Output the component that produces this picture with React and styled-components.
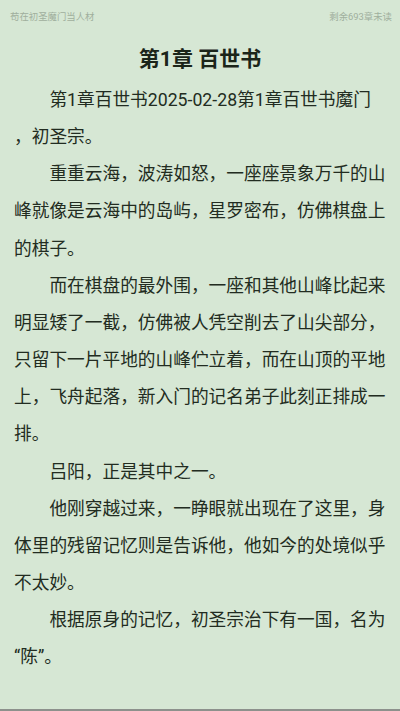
import React from "react";
import styled, { createGlobalStyle } from "styled-components";

const GlobalStyle = createGlobalStyle`
  html, body {
    margin: 0;
    padding: 0;
    background: #d6e7d4;
  }
  body {
    font-family: Roboto, "Noto Sans CJK SC", sans-serif;
  }
`;

const Page = styled.div`
  display: flex;
  flex-direction: column;
  height: 711px;
  box-sizing: border-box;
  background: #d6e7d4;
  border-bottom: 2px solid #8d918c;
  overflow: hidden;
`;

const Header = styled.div`
  display: flex;
  justify-content: space-between;
  align-items: center;
  height: 31px;
  padding: 0 8px 0 10px;
  font-size: 9.4px;
  color: #a0af9d;
`;

const Title = styled.h1`
  margin: 13px 0 0;
  line-height: 30px;
  font-size: 21px;
  font-weight: 700;
  text-align: center;
  color: #1b2519;
`;

const Body = styled.div`
  display: flex;
  flex-direction: column;
  padding: 8px 14px 0;
  font-size: 17.7px;
  line-height: 37.15px;
  color: #222c21;
`;

const Para = styled.p`
  margin: 0;
  white-space: nowrap;
  text-indent: 2em;
`;

const PARAGRAPHS = [
  ["第1章百世书2025-02-28第1章百世书魔门", "，初圣宗。"],
  [
    "重重云海，波涛如怒，一座座景象万千的山",
    "峰就像是云海中的岛屿，星罗密布，仿佛棋盘上",
    "的棋子。",
  ],
  [
    "而在棋盘的最外围，一座和其他山峰比起来",
    "明显矮了一截，仿佛被人凭空削去了山尖部分，",
    "只留下一片平地的山峰伫立着，而在山顶的平地",
    "上，飞舟起落，新入门的记名弟子此刻正排成一",
    "排。",
  ],
  ["吕阳，正是其中之一。"],
  [
    "他刚穿越过来，一睁眼就出现在了这里，身",
    "体里的残留记忆则是告诉他，他如今的处境似乎",
    "不太妙。",
  ],
  ["根据原身的记忆，初圣宗治下有一国，名为", "“陈”。"],
];

export default function App() {
  return (
    <Page>
      <GlobalStyle />
      <Header>
        <span>苟在初圣魔门当人材</span>
        <span>剩余693章未读</span>
      </Header>
      <Title>第1章 百世书</Title>
      <Body>
        {PARAGRAPHS.map((lines, i) => (
          <Para key={i}>
            {lines.map((line, j) => (
              <React.Fragment key={j}>
                {j > 0 && <br />}
                {line}
              </React.Fragment>
            ))}
          </Para>
        ))}
      </Body>
    </Page>
  );
}
